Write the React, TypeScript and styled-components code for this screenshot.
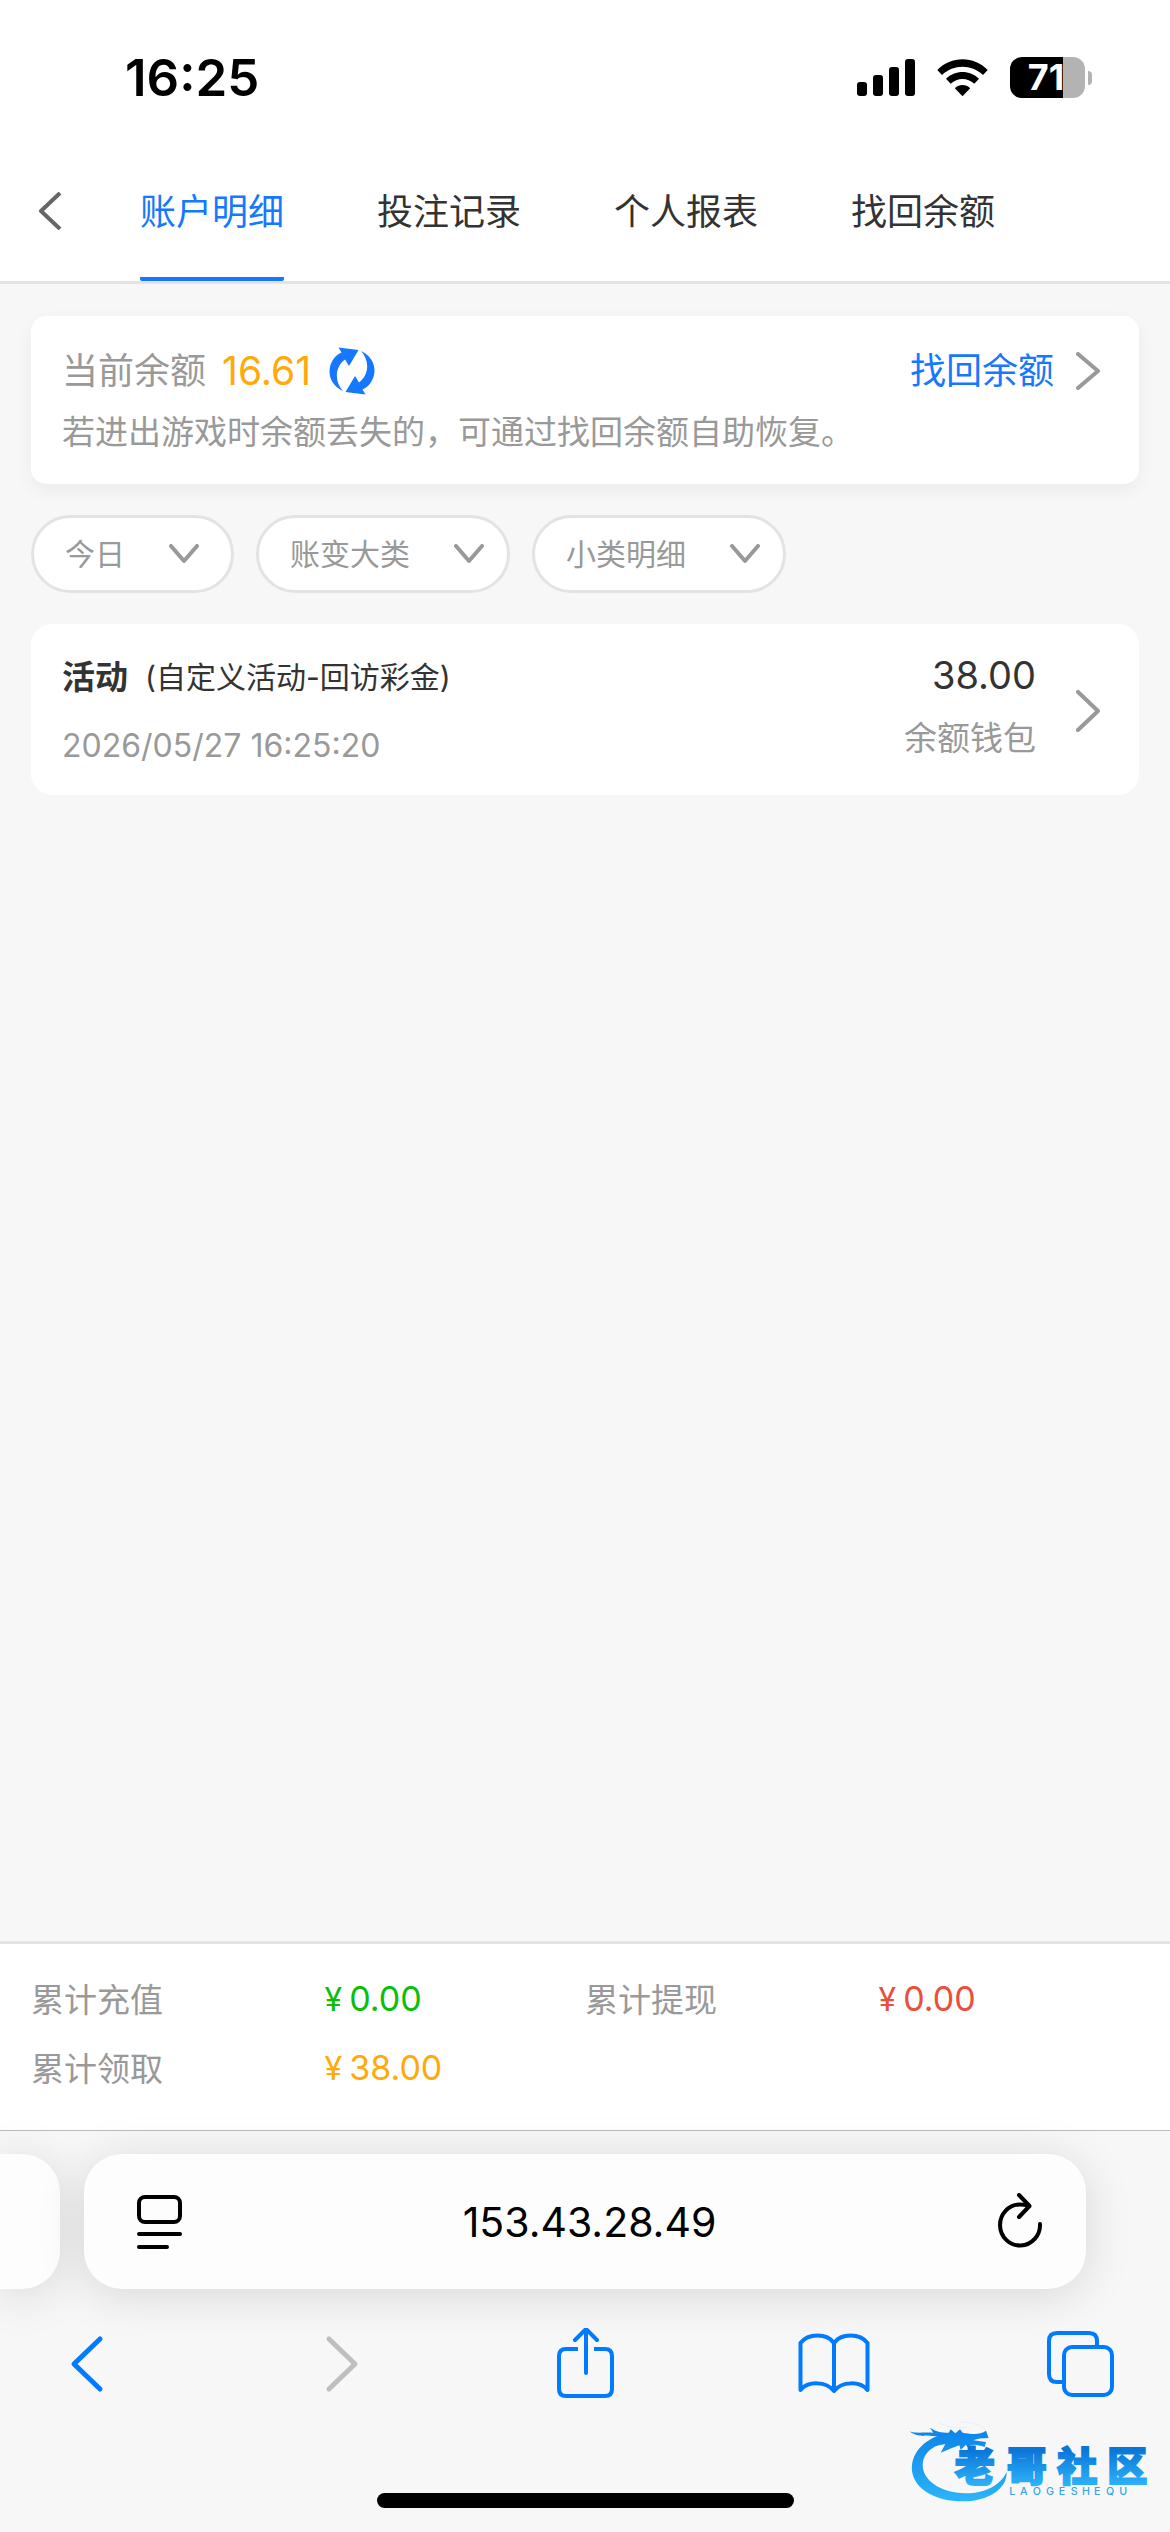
import React, { useState } from "react";
import styled, { createGlobalStyle } from "styled-components";

const color = {
  blue: "#1678ff",
  system: "#007aff",
  orange: "#ffa90a",
  green: "#0abf0a",
  red: "#ea4e3d",
  text: "#333333",
  muted: "#999999",
  line: "#e3e3e3",
  page: "#f7f7f7",
};

const GlobalStyle = createGlobalStyle`
  *, *::before, *::after { box-sizing: border-box; }
  body { margin: 0; background: ${color.page}; }
  body, button, input, select {
    font-family: Inter, "Noto Sans CJK SC", sans-serif;
  }
  button, select, input { margin: 0; padding: 0; border: 0; background: none; color: inherit; }
  button { cursor: pointer; }
  h1, p, dl, dt, dd, ul { margin: 0; padding: 0; }
`;

const Page = styled.div`
  min-height: 100vh;
  display: flex;
  flex-direction: column;
  color: ${color.text};
  background: ${color.page};
`;

const StatusBar = styled.header`
  display: flex;
  align-items: center;
  justify-content: space-between;
  height: 141px;
  padding: 14px 78px 0 125px;
  background: #fff;
  color: #000;
`;

const Clock = styled.time`
  font-size: 51px;
  line-height: 60px;
  font-weight: 600;
`;

const StatusIcons = styled.div`
  display: flex;
  align-items: center;
  gap: 22px;
`;

const Battery = styled.div`
  display: flex;
  align-items: center;
  gap: 3px;
`;

const BatteryBody = styled.div`
  width: 75px;
  height: 41px;
  padding-right: 3px;
  border-radius: 12px;
  background: linear-gradient(90deg, #000 0 53px, #b3b3b3 53px);
  color: #fff;
  font-size: 36px;
  line-height: 41px;
  font-weight: 700;
  text-align: center;
`;

const BatteryCap = styled.div`
  width: 4px;
  height: 14px;
  border-radius: 0 7px 7px 0;
  background: #b3b3b3;
`;

const TabBar = styled.nav`
  display: flex;
  height: 143px;
  padding-left: 31px;
  border-bottom: 3px solid ${color.line};
  background: #fff;
`;

const BackButton = styled.button`
  display: flex;
  align-items: center;
  width: 62px;
`;

const Tab = styled.a<{ $active?: boolean }>`
  display: flex;
  align-items: center;
  padding-top: 6px;
  margin: 0 46px 0 47px;
  border-bottom: 4px solid ${(p) => (p.$active ? color.blue : "transparent")};
  border-radius: 2px;
  color: ${(p) => (p.$active ? color.blue : color.text)};
  font-size: 36px;
  line-height: 54px;
  white-space: nowrap;
  text-decoration: none;
`;

const Content = styled.main`
  flex: 1;
  display: flex;
  flex-direction: column;
  gap: 31px;
  padding: 32px 31px;
`;

const BalanceCard = styled.section`
  padding: 28px 39px 27px 31px;
  border-radius: 15px;
  background: #fff;
  box-shadow: 0 6px 18px rgba(0, 0, 0, 0.05);
`;

const BalanceRow = styled.div`
  display: flex;
  align-items: center;
  font-size: 36px;
  line-height: 54px;
`;

const Label = styled.span`
  color: ${color.muted};
`;

const Balance = styled.strong`
  margin: 0 18px 0 16px;
  color: ${color.orange};
  font-size: 39px;
  font-weight: 400;
`;

const IconButton = styled.button`
  display: flex;
`;

const RecoverLink = styled.a`
  display: flex;
  align-items: center;
  gap: 22px;
  margin-left: auto;
  color: ${color.blue};
  text-decoration: none;
`;

const Hint = styled.p`
  margin-top: 9px;
  color: ${color.muted};
  font-size: 33px;
  line-height: 50px;
`;

const Filters = styled.div`
  display: flex;
  gap: 22px;
`;

const Filter = styled.label`
  display: flex;
  align-items: center;
  gap: 44px;
  min-width: 203px;
  height: 78px;
  padding: 0 23px 0 31px;
  border: 3px solid ${color.line};
  border-radius: 39px;
  background: #fff;
  color: ${color.muted};
`;

const FilterSelect = styled.select`
  appearance: none;
  outline: none;
  font-size: 30px;
  line-height: 45px;
`;

const Record = styled.a`
  display: flex;
  align-items: flex-start;
  justify-content: space-between;
  padding: 26px 39px 24px 31px;
  border-radius: 21px;
  background: #fff;
  color: ${color.text};
  text-decoration: none;
`;

const RecordMain = styled.div`
  flex: 1;
  display: flex;
  flex-direction: column;
  gap: 17px;
`;

const RecordTitle = styled.div`
  display: flex;
  align-items: center;
  gap: 17px;
  font-size: 30px;
  line-height: 54px;
`;

const RecordKind = styled.strong`
  font-size: 33px;
  font-weight: 700;
`;

const RecordTime = styled.time`
  color: ${color.muted};
  font-size: 32px;
  line-height: 50px;
`;

const RecordSide = styled.div`
  display: flex;
  flex-direction: column;
  gap: 13px;
  margin-right: 40px;
  text-align: right;
`;

const RecordAmount = styled.span`
  font-size: 38px;
  line-height: 50px;
`;

const RecordWallet = styled.span`
  color: ${color.muted};
  font-size: 33px;
  line-height: 50px;
`;

const RecordArrow = styled.span`
  display: flex;
  align-self: center;
`;

const Summary = styled.dl`
  display: grid;
  grid-template-columns: 1fr 1fr;
  row-gap: 20px;
  padding: 31px 31px 37px;
  border-top: 3px solid ${color.line};
  background: #fff;
`;

const SummaryItem = styled.div`
  display: flex;
  align-items: center;
  line-height: 48px;
`;

const SummaryLabel = styled.dt`
  width: 53%;
  color: ${color.muted};
  font-size: 33px;
`;

const SummaryValue = styled.dd<{ $tone: string }>`
  display: flex;
  align-items: baseline;
  gap: 7px;
  color: ${(p) => p.$tone};
  font-size: 34px;
`;

const Currency = styled.span`
  font-size: 32px;
`;

const Browser = styled.footer`
  position: relative;
  padding-bottom: 24px;
  border-top: 1px solid #bcbcbc;
  background: ${color.page};
`;

const AddressRow = styled.div`
  display: flex;
  gap: 24px;
  padding: 23px 84px 0 0;
`;

const PreviousTab = styled.div`
  width: 60px;
  border-radius: 0 38px 38px 0;
  background: #fdfdfd;
  box-shadow: 0 6px 48px rgba(0, 0, 0, 0.13);
`;

const AddressBar = styled.div`
  flex: 1;
  display: flex;
  align-items: center;
  height: 135px;
  padding: 0 42px 0 52px;
  border-radius: 38px;
  background: #fdfdfd;
  box-shadow: 0 6px 48px rgba(0, 0, 0, 0.13);
`;

const AddressInput = styled.input`
  flex: 1;
  min-width: 0;
  outline: none;
  color: #000;
  font-size: 41px;
  line-height: 60px;
  text-align: center;
`;

const Toolbar = styled.div`
  display: flex;
  align-items: center;
  justify-content: space-between;
  height: 150px;
  padding: 0 46px 0 50px;
  color: ${color.system};
`;

const HomeIndicator = styled.div`
  width: 417px;
  height: 15px;
  margin: 54px auto 0;
  border-radius: 8px;
  background: #000;
`;

const Watermark = styled.svg`
  position: absolute;
  right: 0;
  bottom: 0;
  pointer-events: none;
`;

const ChevronRight = ({ size = 38 }: { size?: number }) => (
  <svg width={24} height={size} viewBox={`0 0 24 ${size}`} fill="none" stroke={color.muted} strokeWidth={4} strokeLinecap="round" strokeLinejoin="round">
    <path d={`M2 2 L22 ${size / 2} L2 ${size - 2}`} />
  </svg>
);

const ChevronDown = () => (
  <svg width={30} height={20} viewBox="0 0 30 20" fill="none" stroke={color.muted} strokeWidth={4} strokeLinecap="round" strokeLinejoin="round">
    <path d="M2 2 L15 17 L28 2" />
  </svg>
);

const RefreshIcon = () => (
  <svg width={46} height={48} viewBox="0 0 46 48" fill={color.blue}>
    <path d="M9.500 0.500 L29.500 3 L20 19 L16 12.500 C6 20 5 34 14 44 C3 39 -1 29 1 20 C2.500 13 7 8 12.500 5.500 Z" />
    <path d="M36.500 47.500 L16.500 45 L26 29 L30 35.500 C40 28 41 14 32 4 C43 9 47 19 45 28 C43.500 35 39 40 33.500 42.500 Z" />
  </svg>
);

const filters = [
  { label: "日期", value: "今日" },
  { label: "账变类型", value: "账变大类" },
  { label: "小类", value: "小类明细" },
];

const totals = [
  { label: "累计充值", value: "0.00", tone: color.green },
  { label: "累计提现", value: "0.00", tone: color.red },
  { label: "累计领取", value: "38.00", tone: color.orange },
];

const tabs = ["账户明细", "投注记录", "个人报表", "找回余额"];

export default function App() {
  const [active, setActive] = useState(0);

  return (
    <>
      <GlobalStyle />
      <Page>
        <StatusBar>
          <Clock>16:25</Clock>
          <StatusIcons>
            <svg width={58} height={38} viewBox="0 0 58 38">
              <rect x="0" y="23" width="10" height="14" rx="3" />
              <rect x="16" y="16" width="10" height="21" rx="3" />
              <rect x="32" y="8" width="10" height="29" rx="3" />
              <rect x="48" y="0" width="10" height="37" rx="3" />
            </svg>
            <svg width={51} height={38} viewBox="0 0 51 38">
              <path d="M0.300 11 C14 -3.400 37 -3.400 50.700 11 L46 16 C34.500 5 16.500 5 5 16 Z" />
              <path d="M9 19.800 C18 10.700 33 10.700 42 19.800 L37.300 24.800 C30.500 18.500 20.500 18.500 13.700 24.800 Z" />
              <path d="M17.800 29.200 C22 25 29 25 33.200 29.200 L25.500 37.300 Z" />
            </svg>
            <Battery>
              <BatteryBody>71</BatteryBody>
              <BatteryCap />
            </Battery>
          </StatusIcons>
        </StatusBar>

        <TabBar>
          <BackButton aria-label="返回">
            <svg width={32} height={38} viewBox="0 0 32 38" fill="none" stroke="#666" strokeWidth={4} strokeLinejoin="round">
              <path d="M29 1 L10 19 L29 37" />
            </svg>
          </BackButton>
          {tabs.map((name, i) => (
            <Tab key={name} href={`#tab-${i}`} $active={i === active} onClick={() => setActive(i)}>
              {name}
            </Tab>
          ))}
        </TabBar>

        <Content>
          <BalanceCard>
            <BalanceRow>
              <Label>当前余额</Label>
              <Balance>16.61</Balance>
              <IconButton aria-label="刷新余额">
                <RefreshIcon />
              </IconButton>
              <RecoverLink href="#recover">
                找回余额
                <ChevronRight />
              </RecoverLink>
            </BalanceRow>
            <Hint>若进出游戏时余额丢失的，可通过找回余额自助恢复。</Hint>
          </BalanceCard>

          <Filters>
            {filters.map((f) => (
              <Filter key={f.label}>
                <FilterSelect aria-label={f.label}>
                  <option>{f.value}</option>
                </FilterSelect>
                <ChevronDown />
              </Filter>
            ))}
          </Filters>

          <Record href="#record">
            <RecordMain>
              <RecordTitle>
                <RecordKind>活动</RecordKind>
                <span>(自定义活动-回访彩金)</span>
              </RecordTitle>
              <RecordTime>2026/05/27 16:25:20</RecordTime>
            </RecordMain>
            <RecordSide>
              <RecordAmount>38.00</RecordAmount>
              <RecordWallet>余额钱包</RecordWallet>
            </RecordSide>
            <RecordArrow>
              <ChevronRight size={42} />
            </RecordArrow>
          </Record>
        </Content>

        <Summary>
          {totals.map((t) => (
            <SummaryItem key={t.label}>
              <SummaryLabel>{t.label}</SummaryLabel>
              <SummaryValue $tone={t.tone}>
                <Currency>¥</Currency>
                {t.value}
              </SummaryValue>
            </SummaryItem>
          ))}
        </Summary>

        <Browser>
          <AddressRow>
            <PreviousTab />
            <AddressBar>
              <IconButton aria-label="页面设置">
                <svg width={47} height={56} viewBox="0 0 47 56" fill="none" stroke="#000" strokeWidth={4} strokeLinecap="round">
                  <rect x="3" y="3" width="41" height="25" rx="6" />
                  <path d="M3 40 H44 M3 53 H31" />
                </svg>
              </IconButton>
              <AddressInput aria-label="网址" defaultValue="153.43.28.49" />
              <IconButton aria-label="重新载入">
                <svg width={48} height={58} viewBox="0 0 48 58" fill="none" stroke="#000" strokeWidth={4} strokeLinecap="round" strokeLinejoin="round">
                  <path d="M44 31 A20 20.500 0 1 1 24 11.500 C27.500 11.500 30 12 33 13" />
                  <path d="M23 2 L33.500 13 L23 24" />
                </svg>
              </IconButton>
            </AddressBar>
          </AddressRow>

          <Toolbar>
            <IconButton aria-label="后退">
              <svg width={88} height={72} viewBox="0 0 88 72" fill="none" stroke="currentColor" strokeWidth={5} strokeLinecap="round" strokeLinejoin="round">
                <path d="M50 11 L24 36 L50 61" />
              </svg>
            </IconButton>
            <IconButton aria-label="前进" disabled>
              <svg width={88} height={72} viewBox="0 0 88 72" fill="none" stroke="#bfbfbf" strokeWidth={5} strokeLinecap="round" strokeLinejoin="round">
                <path d="M32 11 L58 36 L32 61" />
              </svg>
            </IconButton>
            <IconButton aria-label="分享">
              <svg width={88} height={72} viewBox="0 0 88 72" fill="none" stroke="currentColor" strokeWidth={4} strokeLinecap="round" strokeLinejoin="round">
                <path d="M35 21 H23 Q16 21 16 28 V61 Q16 68 23 68 H62 Q69 68 69 61 V28 Q69 21 62 21 H51" strokeLinecap="butt" />
                <path d="M43 45 V1 M32 12 L43 1 L54 12" />
              </svg>
            </IconButton>
            <IconButton aria-label="书签">
              <svg width={88} height={72} viewBox="0 0 88 72" fill="none" stroke="currentColor" strokeWidth={4} strokeLinecap="round" strokeLinejoin="round">
                <path d="M44 15 C37 5 18 5 10.500 15 V62 C18 53 36 53 44 63 C52 53 70 53 77.500 62 V15 C70 5 51 5 44 15 V63" />
              </svg>
            </IconButton>
            <IconButton aria-label="标签页">
              <svg width={88} height={72} viewBox="0 0 88 72" fill="none" stroke="currentColor" strokeWidth={4}>
                <path d="M28 54 H21 Q13 54 13 46 V13 Q13 5 21 5 H53 Q61 5 61 13 V19" />
                <rect x="28" y="19" width="48" height="48" rx="8" />
              </svg>
            </IconButton>
          </Toolbar>
          <HomeIndicator />

          <Watermark width={280} height={132} viewBox="0 0 840 396" aria-label="老哥社区">
            <defs>
              <linearGradient id="ring" gradientUnits="userSpaceOnUse" x1="0" y1="80" x2="0" y2="306">
                <stop offset="0" stopColor="#0a82e8" />
                <stop offset="1" stopColor="#2cb5fb" />
              </linearGradient>
              <linearGradient id="word" gradientUnits="userSpaceOnUse" x1="0" y1="150" x2="0" y2="252">
                <stop offset="0" stopColor="#0a76d8" />
                <stop offset="1" stopColor="#2cb0f8" />
              </linearGradient>
            </defs>
            <g fill="url(#ring)">
              <path d="M165 100 C95 120 62 165 66 212 C72 268 140 306 225 304 C290 302 352 270 350 215 C334 255 280 282 225 280 C150 278 98 240 98 195 C100 155 130 135 185 122 Z" />
              <path d="M58 94 C80 102 100 96 130 98 L120 83 C138 95 152 98 176 98 L182 88 L196 100 L210 88 L218 98 C240 102 270 106 288 92 L296 114 C276 114 262 116 250 121 L288 126 L284 141 C262 134 246 130 232 142 L228 134 L212 150 L208 136 L186 144 L152 158 L166 132 L135 138 L150 110 C120 106 80 114 58 94 Z" />
            </g>
            <path d="M148 68 Q180 88 230 82 M212 66 Q270 68 290 92" fill="none" stroke="#e3f0fa" strokeWidth={3} />
            <text x="194 350 502 652" y="242" fill="url(#word)" stroke="url(#word)" strokeWidth="6" fontFamily="Noto Sans CJK SC, sans-serif" fontSize="120" fontWeight="900">老哥社区</text>
            <text x="358 390 428 468 506 542 576 612 648 688" y="284" fill="#35a4ee" fontFamily="Inter, sans-serif" fontSize="32" fontWeight="500">LAOGESHEQU</text>
          </Watermark>
        </Browser>
      </Page>
    </>
  );
}
